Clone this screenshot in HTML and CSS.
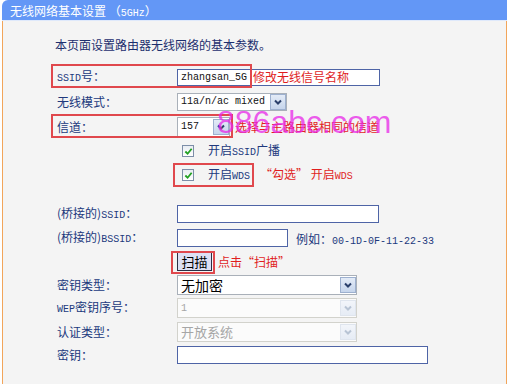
FILE: index.html
```html
<!DOCTYPE html>
<html lang="zh">
<head>
<meta charset="utf-8">
<title>无线网络基本设置</title>
<link rel="stylesheet" href="styles.css">
</head>
<body>
<div class="frame">
  <div class="title">无线网络基本设置 （<span class="mt">5GHz</span>）</div>
  <div class="panel">
    <p class="intro">本页面设置路由器无线网络的基本参数。</p>

    <div class="row r1">
      <span class="lab"><span class="m">SSID</span>号：</span>
      <div class="inp w-ssid"><span class="m dark">zhangsan_5G</span><span class="note n-ssid">修改无线信号名称</span></div>
      <div class="mark mk-ssid"></div>
    </div>

    <div class="row r2">
      <span class="lab">无线模式：</span>
      <div class="sel w-mode"><span class="m dark">11a/n/ac mixed</span><span class="arr"><svg viewBox="0 0 10 10" width="10" height="10"><path d="M2 3.5 L5 6.5 L8 3.5" fill="none" stroke="#2a3f6b" stroke-width="2"/></svg></span></div>
    </div>

    <div class="row r3">
      <span class="lab">信道：</span>
      <div class="sel w-ch"><span class="m dark">157</span><span class="arr"><svg viewBox="0 0 10 10" width="10" height="10"><path d="M2 3.5 L5 6.5 L8 3.5" fill="none" stroke="#2a3f6b" stroke-width="2"/></svg></span></div>
      <span class="note n-ch">选择与主路由器相同的信道</span>
      <div class="mark mk-ch"></div>
    </div>

    <div class="row r4">
      <span class="lab"></span>
      <label class="chk"><span class="box"><svg viewBox="0 0 10 10" width="9" height="9"><path d="M1.5 5 L4 7.5 L8.5 2" fill="none" stroke="#22a022" stroke-width="2"/></svg></span><span class="ctext">开启<span class="m">SSID</span>广播</span></label>
    </div>

    <div class="row r5">
      <span class="lab"></span>
      <label class="chk"><span class="box"><svg viewBox="0 0 10 10" width="9" height="9"><path d="M1.5 5 L4 7.5 L8.5 2" fill="none" stroke="#22a022" stroke-width="2"/></svg></span><span class="ctext">开启<span class="m">WDS</span></span></label>
      <span class="note n-wds">“勾选” 开启<span class="m">WDS</span></span>
      <div class="mark mk-wds"></div>
    </div>

    <div class="row r6">
      <span class="lab">(桥接的)<span class="m">SSID</span>：</span>
      <div class="inp w-bssid-name"></div>
    </div>

    <div class="row r7">
      <span class="lab">(桥接的)<span class="m">BSSID</span>：</span>
      <div class="inp w-bssid"></div>
      <span class="hint">例如：<span class="m">00-1D-0F-11-22-33</span></span>
    </div>

    <div class="row r8">
      <span class="lab"></span>
      <button class="btn" type="button">扫描</button>
      <span class="note n-scan">点击“扫描”</span>
      <div class="mark mk-scan"></div>
    </div>

    <div class="row r9">
      <span class="lab">密钥类型：</span>
      <div class="sel w-key big"><span>无加密</span><span class="arr"><svg viewBox="0 0 10 10" width="10" height="10"><path d="M2 3.5 L5 6.5 L8 3.5" fill="none" stroke="#2a3f6b" stroke-width="2"/></svg></span></div>
    </div>

    <div class="row r10">
      <span class="lab"><span class="m">WEP</span>密钥序号：</span>
      <div class="sel w-key dis"><span class="m">1</span><span class="arr"><svg viewBox="0 0 10 10" width="10" height="10"><path d="M2 3.5 L5 6.5 L8 3.5" fill="none" stroke="#b8c4d4" stroke-width="2"/></svg></span></div>
    </div>

    <div class="row r11">
      <span class="lab">认证类型：</span>
      <div class="sel w-key dis"><span>开放系统</span><span class="arr"><svg viewBox="0 0 10 10" width="10" height="10"><path d="M2 3.5 L5 6.5 L8 3.5" fill="none" stroke="#b8c4d4" stroke-width="2"/></svg></span></div>
    </div>

    <div class="row r12">
      <span class="lab">密钥：</span>
      <div class="inp w-pass"></div>
    </div>

    <div class="wm">886abc.com</div>
  </div>
</div>
</body>
</html>
```

FILE: styles.css
```css
html, body {
  margin: 0;
  padding: 0;
  background: #ffffff;
}
body {
  font-family: "Noto Sans CJK SC", sans-serif;
  font-size: 12px;
  color: #21397d;
  overflow: hidden;
}
.frame {
  margin-left: 2px;
  width: 505px;
  height: 384px;
  display: flex;
  flex-direction: column;
}
.title {
  height: 21px;
  line-height: 21px;
  background: #6397f6;
  color: #ffffff;
  padding-left: 8px;
  border-top-left-radius: 6px;
  border-bottom: 1px solid #dfe9fb;
  box-sizing: border-box;
  white-space: nowrap;
}
.mt {
  font-family: "Liberation Mono", monospace;
  font-size: 10px;
}
.panel {
  position: relative;
  flex: 1;
  background: #f4f4f4;
  border-left: 1px solid #f2a55a;
  border-right: 1px solid #f2a55a;
  display: flex;
  flex-direction: column;
}
.intro {
  margin: 15px 0 0 52px;
  height: 18px;
  line-height: 18px;
  color: #1d2f6e;
}
.m {
  font-family: "Liberation Mono", monospace;
  font-size: 10px;
}
.dark { color: #111111; }
.row {
  position: relative;
  display: flex;
  align-items: center;
  padding-left: 54px;
  height: 24px;
  white-space: nowrap;
}
.r1 { margin-top: 11px; height: 24px; }
.r2 { height: 25px; }
.r3 { height: 25px; }
.r4 { height: 24px; }
.r5 { height: 24px; }
.r6 { margin-top: 15px; height: 24px; }
.r7 { height: 24px; }
.r8 { height: 23px; }
.r9 { height: 23px; }
.r10 { height: 24px; }
.r11 { height: 23px; }
.r12 { height: 24px; }

.lab {
  width: 120px;
  flex: none;
  line-height: 16px;
}
.inp {
  box-sizing: border-box;
  height: 17px;
  border: 1px solid #4e64a6;
  background: #ffffff;
  display: flex;
  align-items: center;
  padding-left: 3px;
  flex: none;
}
.w-ssid { width: 203px; }
.w-bssid-name { width: 202px; height: 18px; }
.w-bssid { width: 111px; height: 18px; }
.w-pass { width: 251px; height: 18px; }
.note {
  color: #e01e1e;
  line-height: 16px;
}
.n-ssid { margin-left: 6px; }
.n-ch { margin-left: 5px; }
.n-wds { margin-left: 10px; }
.n-scan { margin-left: 6px; }
.hint { margin-left: 8px; }

.sel {
  box-sizing: border-box;
  height: 18px;
  border: 1px solid #a9b0b9;
  background: #ffffff;
  display: flex;
  align-items: center;
  justify-content: space-between;
  padding-left: 3px;
  flex: none;
}
.w-mode { width: 110px; }
.w-ch { width: 53px; height: 20px; }
.w-key { width: 180px; height: 20px; }
.arr {
  box-sizing: border-box;
  width: 16px;
  height: 16px;
  margin-right: 0;
  border: 1px solid #9db0cf;
  background: linear-gradient(#e3ebf7, #c6d5ec);
  display: flex;
  align-items: center;
  justify-content: center;
}
.big {
  color: #000000;
  font-size: 14px;
}
.dis {
  border-color: #d2d2cc;
  background: #fbfbfb;
  color: #a6a6a6;
  font-size: 13px;
}
.dis .arr {
  border-color: #dfe5ee;
  background: linear-gradient(#f2f5fa, #e6ecf5);
}
.chk {
  display: flex;
  align-items: center;
  margin-left: 5px;
}
.box {
  box-sizing: border-box;
  width: 12px;
  height: 12px;
  border: 1px solid #7d8ea8;
  background: linear-gradient(#e9edf2, #ffffff);
  display: flex;
  align-items: center;
  justify-content: center;
}
.ctext {
  margin-left: 14px;
  line-height: 16px;
}
.btn {
  box-sizing: border-box;
  width: 35px;
  height: 19px;
  padding: 0;
  border: 1px solid #2b2f45;
  background: #dde0f4;
  color: #000000;
  font-family: "Noto Sans CJK SC", sans-serif;
  font-size: 13px;
  line-height: 15px;
  flex: none;
}
.mark {
  position: absolute;
  box-sizing: border-box;
  border: 2px solid #e0484d;
  pointer-events: none;
}
.mk-ssid { left: 48px; top: -1px; width: 201px; height: 24px; }
.mk-ch { left: 48px; top: 0; width: 182px; height: 24px; }
.mk-wds { left: 170px; top: 0; width: 81px; height: 24px; }
.mk-scan { left: 168px; top: 1px; width: 44px; height: 23px; }
.wm {
  position: absolute;
  left: 214px;
  top: 85px;
  font-family: "Liberation Sans", sans-serif;
  font-size: 32px;
  line-height: 32px;
  color: rgba(232, 40, 232, 0.75);
  pointer-events: none;
}
```
